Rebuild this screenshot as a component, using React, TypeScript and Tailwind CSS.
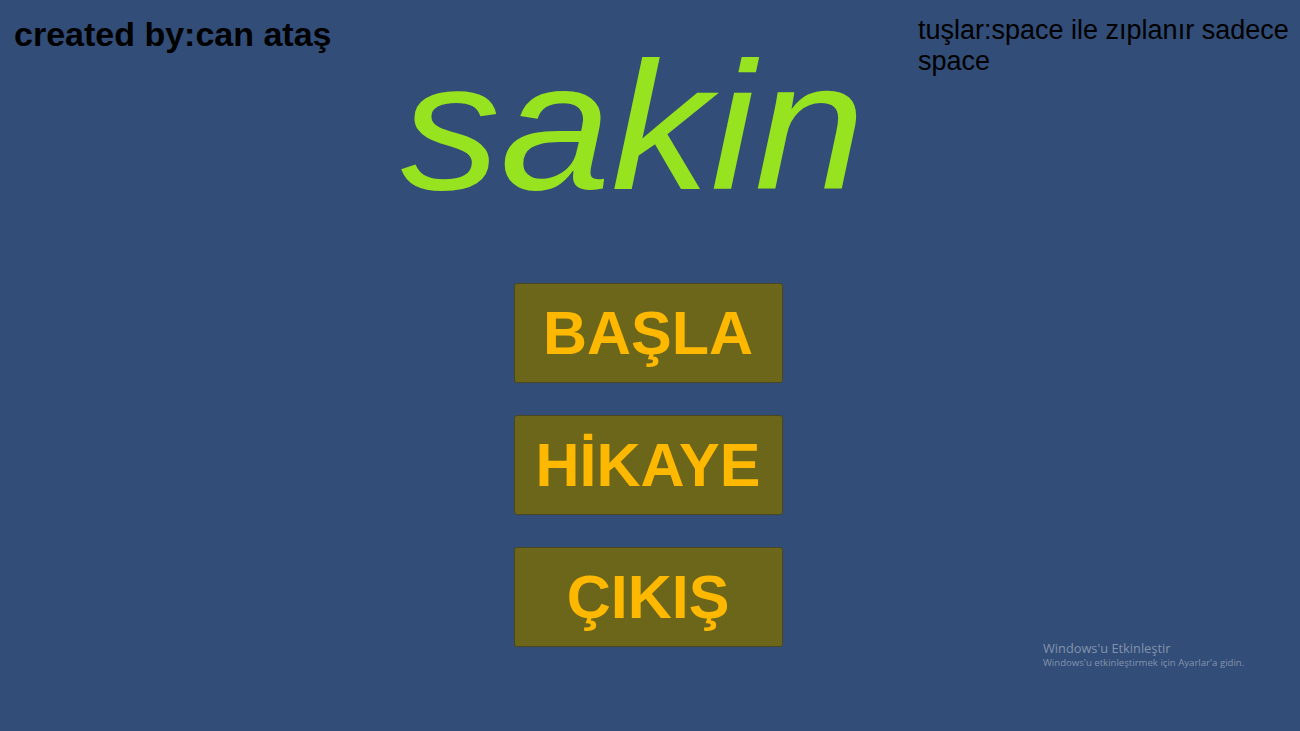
import React from "react";

const menuItems = ["BAŞLA", "HİKAYE", "ÇIKIŞ"];

function MenuButton({ label }: { label: string }) {
  return (
    <button className="flex h-[100px] w-[269px] items-center justify-center rounded-[3px] border border-[#4a4720] bg-[#6b6619] font-['Liberation_Sans',Arial,sans-serif] text-[61px] font-bold leading-none text-[#ffb800]">
      {label}
    </button>
  );
}

export default function App() {
  return (
    <div className="relative h-[731px] w-full overflow-hidden bg-[#314d78] font-['Liberation_Sans',Arial,sans-serif]">
      {/* Header: credits, title, controls */}
      <div className="grid grid-cols-[1fr_auto_1fr] items-start">
        <div className="justify-self-start pl-[14px] pt-[17px] text-[34px] font-bold leading-none text-black">
          created by:can ataş
        </div>
        <h1 className="origin-[50%_83%] scale-y-[0.91] pr-[34px] pt-[22px] text-[199px] font-normal italic leading-none text-[#98e31f]">
          sakin
        </h1>
        <div className="w-[382px] justify-self-end pt-[15px] text-[27px] leading-[31px] text-black">
          tuşlar:space ile zıplanır sadece space
        </div>
      </div>

      {/* Main menu */}
      <div className="mt-[62px] flex flex-col items-center gap-[32px] pr-[4px]">
        {menuItems.map((item) => (
          <MenuButton key={item} label={item} />
        ))}
      </div>

      {/* Activation watermark */}
      <div className="absolute left-[1043px] top-[640px] font-['Open_Sans','Noto_Sans',sans-serif] text-white/40">
        <div className="text-[12.8px] leading-[16px]">Windows'u Etkinleştir</div>
        <div className="text-[9.6px] leading-[14px]">
          Windows'u etkinleştirmek için Ayarlar'a gidin.
        </div>
      </div>
    </div>
  );
}
